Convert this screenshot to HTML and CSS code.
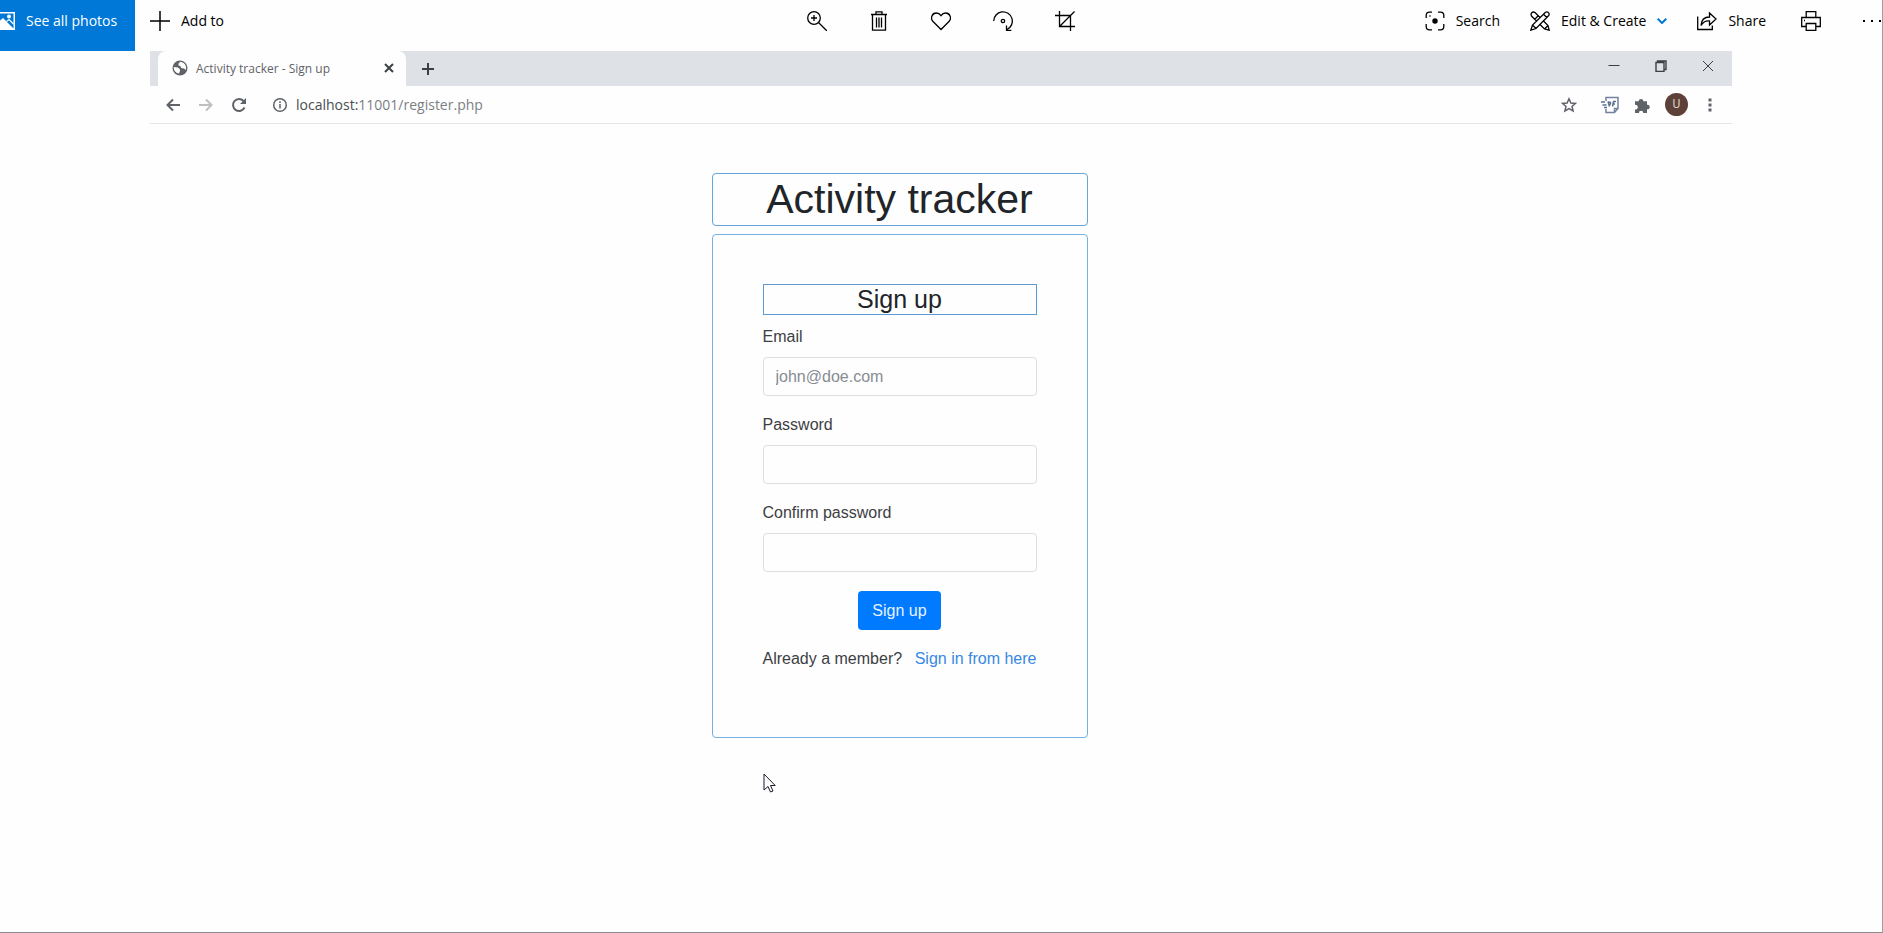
FILE: index.html
```html
<!DOCTYPE html>
<html lang="en">
<head>
<meta charset="utf-8">
<title>Activity tracker - Sign up</title>
<link rel="stylesheet" href="styles.css">
</head>
<body>
<div class="viewer">
  <header class="commands">
    <div class="commands-left">
      <button class="all-photos" type="button">
        <svg class="photo-icon" viewBox="0 0 20 20"><path fill="#fff" fill-rule="evenodd" d="M0 1h20v18H0zM1.500 2.500v10L8 7l10.500 10.500v-15zM14 3.500a2 2 0 1 1 0 4 2 2 0 0 1 0-4z"/><path d="M11.500 10.500l2.500-2 4.500 4.500" stroke="#fff" stroke-width="1.2"/></svg>
        <span>See all photos</span>
      </button>
      <button class="command add-to" type="button">
        <svg class="icon" viewBox="0 0 20 20"><path d="M10 0v20M0 10h20" stroke-width="1.5"/></svg>
        <span>Add to</span>
      </button>
    </div>
    <div class="commands-center">
      <button class="tool" type="button" aria-label="Zoom">
        <svg class="icon" viewBox="0 0 20 20"><circle cx="7" cy="7" r="6.3"/><path d="M11.500 11.500L20 20M7 4v6M4 7h6"/></svg>
      </button>
      <button class="tool" type="button" aria-label="Delete">
        <svg class="icon" viewBox="0 0 20 20"><path d="M2 3.500h16M7 3V.8h6V3M3.500 4v15.200h13V4M7.500 6.500v10M10 6.500v10M12.500 6.500v10"/></svg>
      </button>
      <button class="tool" type="button" aria-label="Favourite">
        <svg class="icon" viewBox="0 0 20 20"><path d="M10 18.500L1.800 10.300C-1 7 1.200 2 5.300 2 7.500 2 9 3.200 10 4.700 11 3.200 12.500 2 14.700 2 18.800 2 21 7 18.200 10.300z"/></svg>
      </button>
      <button class="tool" type="button" aria-label="Rotate">
        <svg class="icon" viewBox="0 0 20 20"><path d="M.7 10A9.300 9.300 0 1 1 14 18.500M13.500 14.500v4.800h4.800"/><circle cx="10" cy="10" r="1.700"/></svg>
      </button>
      <button class="tool" type="button" aria-label="Crop">
        <svg class="icon" viewBox="0 0 20 20"><path d="M4.500 0v15.500H20M0 4.500h15.500V20M4.500 15.500L19.500.5"/></svg>
      </button>
    </div>
    <div class="commands-right">
      <button class="command" type="button">
        <svg class="icon" viewBox="0 0 20 20"><path d="M1.200 7V4.500Q1.200 1.200 4.500 1.200H7M13 1.200h2.500q3.300 0 3.300 3.300V7M18.800 13v2.500q0 3.300-3.300 3.300H13M7 18.800H4.500q-3.300 0-3.300-3.300V13"/><circle cx="10" cy="10" r="2.700" fill="#000" stroke="none"/><circle cx="5" cy="5" r=".8" fill="#000" stroke="none"/></svg>
        <span>Search</span>
      </button>
      <button class="command" type="button">
        <svg class="icon" viewBox="0 0 20 20"><path d="M.8 19.200l1.700-5.200L15.500 1.300Q17 .2 18.400 1.600T18.700 4.500L6 17.500zM2.500 14L6 17.500M13.500 3.200l3.300 3.300M6.500 10L1.500 5Q.5 3 1.800 1.700T5 1.500L10 6.500M4.800 8.200l3.400-3.400M13.500 10l4.500 4.500 1.200 4.700-4.700-1.200L10 13.500M14.500 18l3.500-3.500"/></svg>
        <span>Edit &amp; Create</span>
        <svg class="chevron" viewBox="0 0 10 6"><path d="M.7.7L5 5 9.300.7"/></svg>
      </button>
      <button class="command" type="button">
        <svg class="icon" viewBox="0 0 20 20"><path d="M.7 5.500v13h14.600V14.500M4 14.500Q4.500 6 12.500 6V2L19 8 12.500 14V10Q7 9.500 4 14.500z"/></svg>
        <span>Share</span>
      </button>
      <button class="command print" type="button" aria-label="Print">
        <svg class="icon" viewBox="0 0 20 20"><path d="M5.200 6.500V.7h9.600V6.500M5.200 15.500H.7v-9h18.600v9H14.800M5.200 12.500h9.600v6.800H5.200zM3 9.500h1"/></svg>
      </button>
      <button class="command more" type="button" aria-label="More">
        <svg class="icon" viewBox="0 0 20 20"><path d="M1 10h2M9 10h2M17 10h2" stroke-width="2"/></svg>
      </button>
    </div>
  </header>

  <section class="browser">
    <div class="tabstrip">
      <div class="tab">
        <svg class="i16" viewBox="0 0 16 16"><circle cx="8" cy="8" r="7.500" fill="#5f6368"/><path fill="#fff" d="M1.800 7L6 7.500l2 2V11l-1 2.500C3.500 13 1.500 10 1.800 7zM8.500 1.800L6.500 3.500v2L8.500 6 9 8l3 .5 1.800 1.500C15 6 12.500 2.500 8.500 1.800z"/></svg>
        <span class="tab-title">Activity tracker - Sign up</span>
        <button class="plain" type="button" aria-label="Close tab"><svg class="i10" viewBox="0 0 10 10"><path d="M1 1l8 8M9 1L1 9"/></svg></button>
      </div>
      <button class="plain new-tab" type="button" aria-label="New tab"><svg class="i12" viewBox="0 0 12 12"><path d="M6 0v12M0 6h12"/></svg></button>
      <div class="window-controls">
        <button class="plain" type="button" aria-label="Minimize"><svg class="i12" viewBox="0 0 12 12"><path d="M.5 5.500h11"/></svg></button>
        <button class="plain" type="button" aria-label="Restore"><svg class="i12" viewBox="0 0 12 12"><path d="M1 2.500h8v9H1zM2.500 2.500V1H11v8.500H9" stroke-width="1.400"/></svg></button>
        <button class="plain" type="button" aria-label="Close"><svg class="i12" viewBox="0 0 12 12"><path d="M1 1l10 10M11 1L1 11"/></svg></button>
      </div>
    </div>
    <div class="toolbar">
      <div class="nav">
        <button class="plain" type="button" aria-label="Back"><svg class="i16" viewBox="0 0 16 16"><path d="M15 8H2.500M8 2.500L2.500 8 8 13.500"/></svg></button>
        <button class="plain faded" type="button" aria-label="Forward"><svg class="i16" viewBox="0 0 16 16"><path d="M1 8h12.500M8 2.500L13.500 8 8 13.500"/></svg></button>
        <button class="plain" type="button" aria-label="Reload"><svg class="i16" viewBox="0 0 16 16"><path d="M13.500 10.500A6 6 0 1 1 12.500 4L14 5.500"/><path d="M15 1v6H9z" fill="#5f6368" stroke="none"/></svg></button>
      </div>
      <svg class="i16" viewBox="0 0 16 16"><circle cx="8" cy="8" r="6.300"/><path d="M8 7v4.500M8 4.300v1.700"/></svg>
      <div class="url"><span class="host">localhost:</span>11001/register.php</div>
      <div class="extras">
        <svg class="i16 star" viewBox="0 0 16 16"><path d="M8 1.800l1.900 4.200 4.600.4-3.500 3 1.100 4.500L8 11.500l-4.100 2.400L5 9.400l-3.500-3 4.600-.4z"/></svg>
        <svg class="i18" viewBox="0 0 18 18"><path d="M5 5V1.500h12v11L13.500 16.500H5V13M13.500 16v-3.500H17" stroke="#7282a0"/><path d="M0 6h4M1.500 9h4M3 11.500h3M7 5.500l1.500 5M7 6.500q3-1 2.500 1t-2 2M11.500 10.500l1-5h2.500M11.500 8h2.500" stroke="#5b6d90"/></svg>
        <svg class="i18" viewBox="0 0 18 18"><path fill="#5f6368" stroke="none" d="M2 5.200h3.700a2.300 2.300 0 1 1 4.600 0H14v3.600a2.300 2.300 0 1 1 0 4.500V17h-3.700a2.200 2.200 0 1 0-4.400 0H2v-3.600a2.300 2.300 0 1 0 0-4.500z"/></svg>
        <span class="avatar">U</span>
        <svg class="i16" viewBox="0 0 16 16"><path fill="#5f6368" stroke="none" d="M6.500 1.500h3v3h-3zM6.500 6.500h3v3h-3zM6.500 11.500h3v3h-3z"/></svg>
      </div>
    </div>

    <main class="page">
      <div class="content">
        <h1 class="title">Activity tracker</h1>
        <form class="card">
          <h2 class="subtitle">Sign up</h2>
          <div class="field"><label for="email">Email</label><input id="email" type="email" placeholder="john@doe.com"></div>
          <div class="field"><label for="password">Password</label><input id="password" type="password"></div>
          <div class="field"><label for="confirm">Confirm password</label><input id="confirm" type="password"></div>
          <button class="submit" type="button">Sign up</button>
          <p class="member"><span>Already a member?</span> <a href="#">Sign in from here</a></p>
        </form>
      </div>
    </main>
  </section>
  <svg class="cursor" viewBox="0 0 13 20"><path fill="#fff" stroke="#1b1b2b" d="M1 1v16l4-3.500 2.500 5.500 2.500-1-2.500-5.500h4.700z"/></svg>
</div>
</body>
</html>
```

FILE: styles.css
```css
* { box-sizing: border-box; }
body {
  margin: 0;
  background: #fefefe;
  color: #000;
  font-family: "Open Sans", "Noto Sans", sans-serif;
}
button { font: inherit; color: inherit; background: none; border: 0; padding: 0; }
svg { fill: none; display: block; flex: none; }
.viewer {
  position: relative;
  min-height: 100vh;
  border-right: 1px solid #a0a0a0;
  border-bottom: 1px solid #8c8c8c;
  overflow: hidden;
}
.commands {
  display: grid;
  grid-template-columns: 1fr auto 1fr;
  height: 51px;
  font-size: 14px;
}
.commands-left, .commands-center, .commands-right { display: flex; }
.commands-right { justify-content: flex-end; gap: 30px; }
.all-photos, .command, .tool {
  display: flex;
  align-items: center;
  padding-bottom: 9px;
  white-space: nowrap;
}
.commands span { padding-bottom: 2px; }
.command { gap: 11px; }
.icon { width: 20px; height: 20px; stroke: #000; stroke-width: 1.3; }
.all-photos {
  gap: 11px;
  width: 135px;
  margin-right: 15px;
  background: #0078d7;
  color: #fff;
}
.photo-icon { width: 20px; height: 20px; margin-left: -5px; }
.tool { width: 62px; justify-content: center; }
.chevron { width: 10px; height: 6px; stroke: #0078d7; stroke-width: 2; }
.print { margin-left: 5px; }
.more { margin-left: 11px; }

.browser { margin: 0 150px; }
.tabstrip { display: flex; height: 35px; padding-left: 8px; background: #dee1e6; }
.tab {
  display: flex;
  align-items: center;
  gap: 8px;
  width: 248px;
  padding: 0 12px 1px 14px;
  border-radius: 8px 8px 0 0;
  background: #fefefe;
  color: #5f6368;
  font-size: 12px;
}
.tab-title { flex: 1; white-space: nowrap; }
.plain svg { stroke: #3c4043; }
.i10 { width: 10px; height: 10px; stroke-width: 2; }
.i12 { width: 12px; height: 12px; }
.i16 { width: 16px; height: 16px; }
.i18 { width: 18px; height: 18px; }
.new-tab { margin-left: 16px; }
.new-tab svg { stroke-width: 2; }
.window-controls { display: flex; gap: 35px; margin-left: auto; padding: 0 18px 5px 0; align-items: center; }
.toolbar {
  display: flex;
  align-items: center;
  height: 38px;
  padding: 0 14px 0 15px;
  border-bottom: 1px solid #e4e5e7;
  color: #7b7e82;
  font-size: 14px;
}
.toolbar svg { stroke: #5f6368; stroke-width: 2; }
.nav { display: flex; gap: 17px; margin-right: 25px; }
.nav .faded { opacity: .4; }
.toolbar > .i16 { stroke-width: 1.5; }
.url { margin-left: 8px; }
.host { color: #4a4d51; }
.extras { display: flex; align-items: center; gap: 14px; margin-left: auto; }
.toolbar .extras svg { stroke-width: 1.5; }
.star { margin-right: 10px; }
.avatar {
  width: 23px;
  height: 23px;
  border-radius: 50%;
  background: #5d4037;
  color: #d9cfcc;
  font: 12px/23px Roboto, sans-serif;
  text-align: center;
}

.page {
  display: flex;
  justify-content: center;
  padding: 49px 83px 0 0;
  font-family: "Liberation Sans", Arial, sans-serif;
  font-size: 16px;
  line-height: 20px;
  color: #3d4043;
}
.content { width: 376px; }
.title, .subtitle { margin: 0; font-weight: 400; text-align: center; color: #212529; }
.title {
  margin-bottom: 8px;
  border: 1px solid #64a5dc;
  border-radius: 4px;
  font-size: 41px;
  line-height: 51px;
}
.card {
  display: flex;
  flex-direction: column;
  gap: 19px;
  padding: 49px 50px 68px;
  border: 1px solid #74b0e4;
  border-radius: 4px;
}
.subtitle { margin-bottom: -7px; border: 1px solid #5a9bd3; font-size: 25px; line-height: 29px; }
.field { display: flex; flex-direction: column; gap: 10px; }
.field input {
  width: 100%;
  height: 39px;
  padding: 0 12px;
  border: 1px solid #dcdfe2;
  border-radius: 4px;
  background: #fefefe;
  color: #3d4043;
  font: inherit;
}
.field input::placeholder { color: #868c92; opacity: 1; }
.submit {
  align-self: center;
  height: 39px;
  padding: 0 14px;
  border-radius: 4px;
  background: #007bff;
  color: #e8f3ff;
}
.member { display: flex; justify-content: space-between; margin: 0; white-space: nowrap; }
.member a { color: #3788e2; text-decoration: none; }
.cursor { position: absolute; left: 763px; top: 773px; width: 13px; height: 20px; }
```
